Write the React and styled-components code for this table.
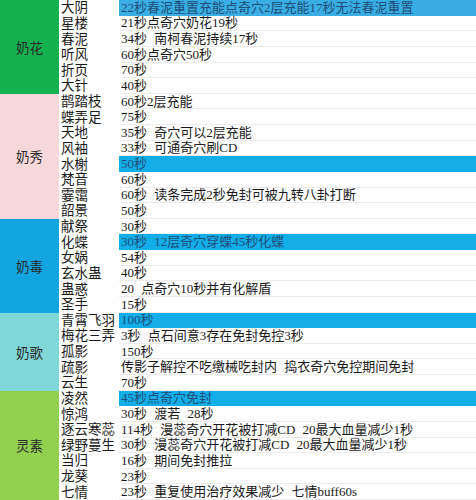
import styled, { createGlobalStyle } from "styled-components"

const GlobalStyle = createGlobalStyle`
    html, body {
        margin: 0;
        padding: 0;
        background: #ffffff;
        overflow: hidden;
    }
`

const groups = [
    {
        name: "奶花", color: "#14b14e", rows: [
            ["大阴", "22秒春泥重置充能点奇穴2层充能17秒无法春泥重置", "#3aaee4"],
            ["星楼", "21秒点奇穴奶花19秒"],
            ["春泥", "34秒 南柯春泥持续17秒"],
            ["听风", "60秒点奇穴50秒"],
            ["折页", "70秒"],
            ["大针", "40秒"],
        ]
    },
    {
        name: "奶秀", color: "#f8d8da", rows: [
            ["鹊踏枝", "60秒2层充能"],
            ["蝶弄足", "75秒"],
            ["天地", "35秒 奇穴可以2层充能"],
            ["风袖", "33秒 可通奇穴刷CD"],
            ["水榭", "50秒", "#13aee8"],
            ["梵音", "60秒"],
            ["霎霭", "60秒 读条完成2秒免封可被九转八卦打断"],
            ["韶景", "50秒"],
        ]
    },
    {
        name: "奶毒", color: "#12a5e0", rows: [
            ["献祭", "30秒"],
            ["化蝶", "30秒 12层奇穴穿蝶45秒化蝶", "#13aee8"],
            ["女娲", "54秒"],
            ["玄水蛊", "40秒"],
            ["蛊惑", "20 点奇穴10秒并有化解盾"],
            ["圣手", "15秒"],
        ]
    },
    {
        name: "奶歌", color: "#80d7d8", rows: [
            ["青霄飞羽", "100秒", "#13aee8"],
            ["梅花三弄", "3秒 点石间意3存在免封免控3秒"],
            ["孤影", "150秒"],
            ["疏影", "传影子解控不吃缴械吃封内 捣衣奇穴免控期间免封"],
            ["云生", "70秒"],
        ]
    },
    {
        name: "灵素", color: "#92d050", rows: [
            ["凌然", "45秒点奇穴免封", "#13aee8"],
            ["惊鸿", "30秒 渡若 28秒"],
            ["逐云寒蕊", "114秒 漫蕊奇穴开花被打减CD 20最大血量减少1秒"],
            ["绿野蔓生", "30秒 漫蕊奇穴开花被打减CD 20最大血量减少1秒"],
            ["当归", "16秒 期间免封推拉"],
            ["龙葵", "23秒"],
            ["七情", "23秒 重复使用治疗效果减少 七情buff60s"],
        ]
    },
]

export default function App() {
    return (
        <>
            <GlobalStyle />
            <Sheet>
                {groups.map(g => (
                    <Group key={g.name}>
                        <GroupLabel $bg={g.color}>{g.name}</GroupLabel>
                        <Rows>
                            {g.rows.map(([name, value, hl]) => (
                                <Row key={name}>
                                    <Name>{name}</Name>
                                    <Value $hl={hl}>{value}</Value>
                                </Row>
                            ))}
                        </Rows>
                    </Group>
                ))}
            </Sheet>
        </>
    )
}

const Sheet = styled.div`
    width: 476px;
    height: 500px;
    display: flex;
    flex-direction: column;
    font-family: "Liberation Serif", "Noto Sans CJK SC", serif;
    font-size: 13px;
    color: #1a1a1a;
    background: #ffffff;
`

const Group = styled.div`
    display: flex;
`

const GroupLabel = styled.div`
    width: 59px;
    flex-shrink: 0;
    display: flex;
    align-items: center;
    justify-content: center;
    background: ${p => p.$bg};
    color: #2a2a2a;
    font-size: 13.5px;
`

const Rows = styled.div`
    flex: 1;
    display: flex;
    flex-direction: column;
`

const Row = styled.div`
    height: 15.625px;
    display: flex;
    align-items: center;
    line-height: 15px;
    white-space: nowrap;
    overflow: hidden;
`

const Name = styled.div`
    width: 60px;
    flex-shrink: 0;
    padding-left: 2px;
    box-sizing: border-box;
    height: 100%;
    display: flex;
    align-items: center;
    font-size: 13.5px;
`

const Value = styled.div`
    flex: 1;
    height: 100%;
    display: flex;
    align-items: center;
    padding-left: 2px;
    box-sizing: border-box;
    word-spacing: 4px;
    background: ${p => p.$hl || "#ffffff"};
    border-bottom: 1px solid ${p => p.$hl || "#ececec"};
    color: ${p => p.$hl ? "#1f4f7a" : "#1a1a1a"};
`
